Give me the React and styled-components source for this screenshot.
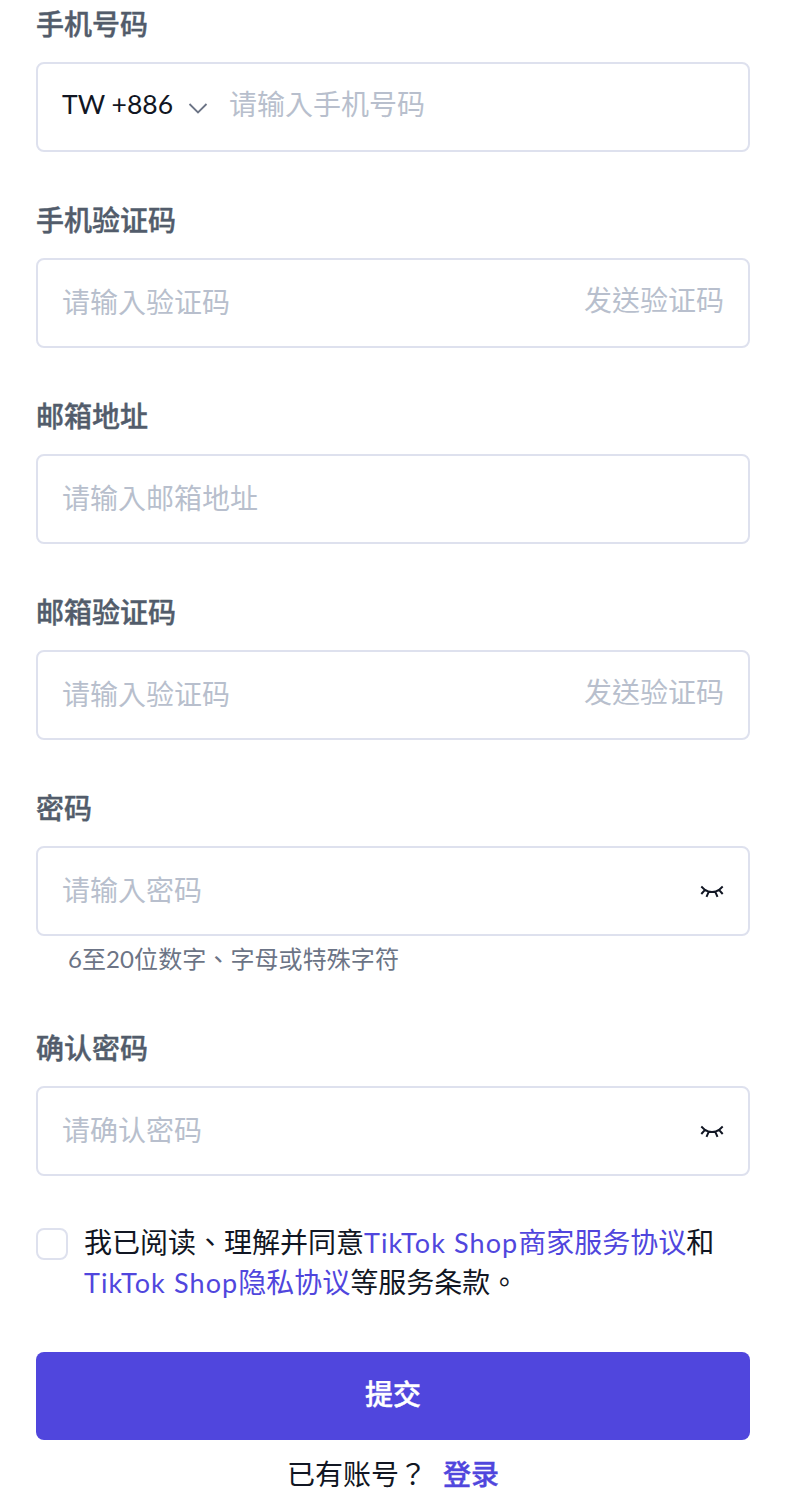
import React, { useState } from "react";
import styled, { createGlobalStyle } from "styled-components";

const GlobalStyle = createGlobalStyle`
  *, *::before, *::after {
    box-sizing: border-box;
  }
  body {
    margin: 0;
    background-color: #fff;
    color: #111623;
    font-family: Lato, "Noto Sans CJK TC", sans-serif;
    font-size: 28px;
    line-height: 40px;
  }
`;

const Form = styled.form`
  display: flex;
  flex-direction: column;
  height: 1512px;
  padding: 4px 38px 0 36px;
  overflow: hidden;
`;

const Field = styled.div`
  display: flex;
  flex-direction: column;
  height: ${(props) => (props.$hint ? "240px" : "196px")};
`;

const Label = styled.label`
  height: 40px;
  margin-bottom: 18px;
  color: #525c6b;
  font-weight: 500;
  -webkit-text-stroke: 0.4px #525c6b;
`;

const InputBox = styled.div`
  display: flex;
  align-items: center;
  height: 90px;
  flex-shrink: 0;
  padding: 0 24px;
  border: 2px solid #dee1ee;
  border-radius: 8px;
`;

const Input = styled.input`
  flex: 1;
  min-width: 0;
  height: 44px;
  padding: 0;
  margin-bottom: ${(props) => (props.$raised ? "6px" : "2px")};
  border: none;
  outline: none;
  background: transparent;
  color: #111623;
  font: inherit;

  &::placeholder {
    color: #b8bfcd;
    opacity: 1;
  }
`;

const AreaCode = styled.button`
  display: flex;
  align-items: center;
  margin: 0 21px 4px 0;
  padding: 0;
  border: none;
  background: none;
  color: #111623;
  font: inherit;
`;

const AreaText = styled.span`
  width: 126px;
  margin-bottom: 2px;
  font-size: 26.5px;
  text-align: left;
  white-space: nowrap;
`;

const SendButton = styled.button`
  margin-bottom: 6px;
  padding: 0;
  border: none;
  background: none;
  color: #b8bfcd;
  font: inherit;
`;

const EyeButton = styled.button`
  display: flex;
  padding: 0;
  border: none;
  background: none;
  color: #111623;
`;

const Hint = styled.div`
  padding: 3px 0 0 32px;
  color: #6c7486;
  font-size: 24px;
  letter-spacing: 0.08px;
`;

const Agreement = styled.div`
  display: flex;
  height: 84px;
  margin-top: -2px;
  margin-bottom: 46px;
`;

const Checkbox = styled.input`
  appearance: none;
  flex-shrink: 0;
  width: 32px;
  height: 32px;
  margin: 6px 16px 0 0;
  border: 2px solid #dee1ee;
  border-radius: 8px;
`;

const AgreementText = styled.div`
  white-space: nowrap;
`;

const Link = styled.a`
  color: #5046dd;
  text-decoration: none;
`;

const Latin = styled.span`
  font-size: 27px;
  line-height: 1;
  letter-spacing: 1.1px;
`;

const SubmitButton = styled.button`
  height: 88px;
  flex-shrink: 0;
  padding: 0 0 4px;
  border: none;
  border-radius: 8px;
  background-color: #5046dd;
  color: #fff;
  font: inherit;
  font-weight: 500;
  -webkit-text-stroke: 0.4px #fff;
`;

const Footer = styled.div`
  display: flex;
  justify-content: center;
  gap: 16px;
  margin-top: 14px;
`;

const LoginLink = styled(Link)`
  font-weight: 500;
  -webkit-text-stroke: 0.4px #5046dd;
`;

function ArrowIcon() {
  return (
    <svg width="20" height="20" viewBox="0 0 20 20" fill="none">
      <path d="M1.5 9L10 17.5L18.5 9" stroke="#6c7486" strokeWidth="1.8" />
    </svg>
  );
}

function ClosedEyeIcon() {
  return (
    <svg width="24" height="24" viewBox="0 0 24 24" fill="none">
      <path
        d="M1.3 7.6L5 10.9C8.8 13.6 15.2 13.6 19 10.9L22.7 7.6M5 10.9L1.3 15M8.7 12.8L6.5 17.8M15.3 12.8L17.5 17.8M19 10.9L22.7 15"
        stroke="currentColor"
        strokeWidth="2"
      />
    </svg>
  );
}

function CodeField({ id, label }) {
  return (
    <Field>
      <Label htmlFor={id}>{label}</Label>
      <InputBox>
        <Input id={id} placeholder="请输入验证码" />
        <SendButton type="button">发送验证码</SendButton>
      </InputBox>
    </Field>
  );
}

function PasswordField({ id, label, placeholder, hint }) {
  const [visible, setVisible] = useState(false);

  return (
    <Field $hint={hint}>
      <Label htmlFor={id}>{label}</Label>
      <InputBox>
        <Input
          id={id}
          type={visible ? "text" : "password"}
          placeholder={placeholder}
        />
        <EyeButton type="button" onClick={() => setVisible(!visible)}>
          <ClosedEyeIcon />
        </EyeButton>
      </InputBox>
      {hint && <Hint>{hint}</Hint>}
    </Field>
  );
}

function App() {
  return (
    <>
      <GlobalStyle />
      <Form onSubmit={(e) => e.preventDefault()}>
        <Field>
          <Label htmlFor="phone">手机号码</Label>
          <InputBox>
            <AreaCode type="button">
              <AreaText>TW +886</AreaText>
              <ArrowIcon />
            </AreaCode>
            <Input id="phone" placeholder="请输入手机号码" $raised />
          </InputBox>
        </Field>
        <CodeField id="phoneCode" label="手机验证码" />
        <Field>
          <Label htmlFor="email">邮箱地址</Label>
          <InputBox>
            <Input id="email" placeholder="请输入邮箱地址" />
          </InputBox>
        </Field>
        <CodeField id="emailCode" label="邮箱验证码" />
        <PasswordField
          id="password"
          label="密码"
          placeholder="请输入密码"
          hint="6至20位数字、字母或特殊字符"
        />
        <PasswordField
          id="confirm"
          label="确认密码"
          placeholder="请确认密码"
        />
        <Agreement>
          <Checkbox type="checkbox" />
          <AgreementText>
            我已阅读、理解并同意
            <Link>
              <Latin>TikTok Shop</Latin>商家服务协议
            </Link>
            和<br />
            <Link>
              <Latin>TikTok Shop</Latin>隐私协议
            </Link>
            等服务条款。
          </AgreementText>
        </Agreement>
        <SubmitButton type="submit">提交</SubmitButton>
        <Footer>
          <span>已有账号？</span>
          <LoginLink>登录</LoginLink>
        </Footer>
      </Form>
    </>
  );
}

export default App;
